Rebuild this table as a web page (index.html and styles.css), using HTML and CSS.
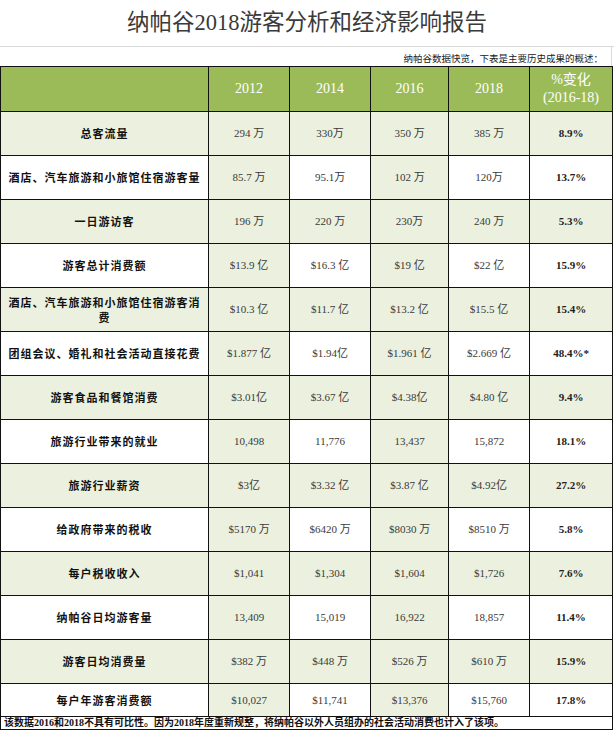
FILE: index.html
```html
<!DOCTYPE html>
<html lang="zh-CN">
<head>
<meta charset="utf-8">
<title>纳帕谷2018游客分析和经济影响报告</title>
<link rel="stylesheet" href="styles.css">
</head>
<body>
<div class="page">
  <h1 class="title">纳帕谷2018游客分析和经济影响报告</h1>
  <div class="subtitle">纳帕谷数据快览，下表是主要历史成果的概述：</div>
  <table class="data">
    <colgroup>
      <col class="c-label"><col class="c-y1"><col class="c-y2"><col class="c-y3"><col class="c-y4"><col class="c-pct">
    </colgroup>
    <thead>
      <tr>
        <th></th><th>2012</th><th>2014</th><th>2016</th><th>2018</th><th>%变化<br>(2016-18)</th>
      </tr>
    </thead>
    <tbody>
      <tr class="odd"><td class="label">总客流量</td><td>294 万</td><td>330万</td><td>350 万</td><td>385 万</td><td class="pct">8.9%</td></tr>
      <tr class="even"><td class="label">酒店、汽车旅游和小旅馆住宿游客量</td><td>85.7 万</td><td>95.1万</td><td>102 万</td><td>120万</td><td class="pct">13.7%</td></tr>
      <tr class="odd"><td class="label">一日游访客</td><td>196 万</td><td>220 万</td><td>230万</td><td>240 万</td><td class="pct">5.3%</td></tr>
      <tr class="even"><td class="label">游客总计消费额</td><td>$13.9 亿</td><td>$16.3 亿</td><td>$19 亿</td><td>$22 亿</td><td class="pct">15.9%</td></tr>
      <tr class="odd"><td class="label">酒店、汽车旅游和小旅馆住宿游客消费</td><td>$10.3 亿</td><td>$11.7 亿</td><td>$13.2 亿</td><td>$15.5 亿</td><td class="pct">15.4%</td></tr>
      <tr class="even"><td class="label">团组会议、婚礼和社会活动直接花费</td><td>$1.877 亿</td><td>$1.94亿</td><td>$1.961 亿</td><td>$2.669 亿</td><td class="pct">48.4%*</td></tr>
      <tr class="odd"><td class="label">游客食品和餐馆消费</td><td>$3.01亿</td><td>$3.67 亿</td><td>$4.38亿</td><td>$4.80 亿</td><td class="pct">9.4%</td></tr>
      <tr class="even"><td class="label">旅游行业带来的就业</td><td>10,498</td><td>11,776</td><td>13,437</td><td>15,872</td><td class="pct">18.1%</td></tr>
      <tr class="odd"><td class="label">旅游行业薪资</td><td>$3亿</td><td>$3.32 亿</td><td>$3.87 亿</td><td>$4.92亿</td><td class="pct">27.2%</td></tr>
      <tr class="even"><td class="label">给政府带来的税收</td><td>$5170 万</td><td>$6420 万</td><td>$8030 万</td><td>$8510 万</td><td class="pct">5.8%</td></tr>
      <tr class="odd"><td class="label">每户税收收入</td><td>$1,041</td><td>$1,304</td><td>$1,604</td><td>$1,726</td><td class="pct">7.6%</td></tr>
      <tr class="even"><td class="label">纳帕谷日均游客量</td><td>13,409</td><td>15,019</td><td>16,922</td><td>18,857</td><td class="pct">11.4%</td></tr>
      <tr class="odd"><td class="label">游客日均消费量</td><td>$382 万</td><td>$448 万</td><td>$526 万</td><td>$610 万</td><td class="pct">15.9%</td></tr>
      <tr class="even last"><td class="label">每户年游客消费额</td><td>$10,027</td><td>$11,741</td><td>$13,376</td><td>$15,760</td><td class="pct">17.8%</td></tr>
      <tr class="note"><td colspan="6">该数据2016和2018不具有可比性。因为2018年度重新规整，将纳帕谷以外人员组办的社会活动消费也计入了该项。</td></tr>
    </tbody>
  </table>
</div>
</body>
</html>
```

FILE: styles.css
```css
html, body {
  margin: 0;
  padding: 0;
  background: #ffffff;
}

.page {
  width: 614px;
  font-family: "Liberation Serif", "Noto Sans CJK SC", serif;
  color: #333333;
}

.title {
  margin: 0;
  height: 46px;
  line-height: 46px;
  text-align: center;
  font-family: "Liberation Serif", "Noto Sans CJK SC", serif;
  font-weight: 400;
  font-size: 22.5px;
  color: #3a3a3a;
  border-bottom: 1px solid #d9d9d9;
}

.subtitle {
  width: 612px;
  box-sizing: border-box;
  height: 19px;
  padding: 4px 8px 0 0;
  line-height: 15px;
  text-align: right;
  font-family: "Noto Sans CJK SC", sans-serif;
  font-size: 9.5px;
  color: #222222;
  border-right: 1px solid #d9d9d9;
}

.data {
  width: 612px;
  table-layout: fixed;
  border-collapse: collapse;
}

.c-label { width: 208px; }
.c-y1 { width: 81px; }
.c-y2 { width: 81px; }
.c-y3 { width: 78px; }
.c-y4 { width: 81px; }
.c-pct { width: 83px; }

.data th,
.data td {
  border: 1px solid #111111;
  padding: 0 4px;
  text-align: center;
  vertical-align: middle;
}

.data thead th {
  height: 44px;
  background: #9bbb59;
  color: #ffffff;
  font-weight: 400;
  font-size: 14px;
  line-height: 18px;
  font-family: "Liberation Serif", "Noto Sans CJK SC", serif;
}

.data tbody td {
  height: 43px;
  font-size: 11px;
  line-height: 15px;
  color: #3a3a3a;
}

.data tbody tr.odd td {
  background: #ebf1de;
}

.data tbody tr.even td {
  background: #ffffff;
}

.data tbody tr.even td:nth-child(2),
.data tbody tr.even td:nth-child(4) {
  background: #ebf1de;
}

.data tbody td.label {
  font-family: "Noto Sans CJK SC", sans-serif;
  font-weight: 700;
  font-size: 11px;
  letter-spacing: 1px;
  color: #111111;
  padding: 0 3px;
}

.data tbody td.pct {
  font-weight: 700;
  color: #222222;
}

.data tbody tr.last td {
  height: 32px;
}

.data tbody tr.note td {
  height: 12px;
  padding: 0 3px;
  text-align: left;
  font-family: "Liberation Serif", "Noto Sans CJK SC", serif;
  font-weight: 700;
  font-size: 10px;
  line-height: 12px;
  color: #111111;
  background: #ffffff;
}
```
